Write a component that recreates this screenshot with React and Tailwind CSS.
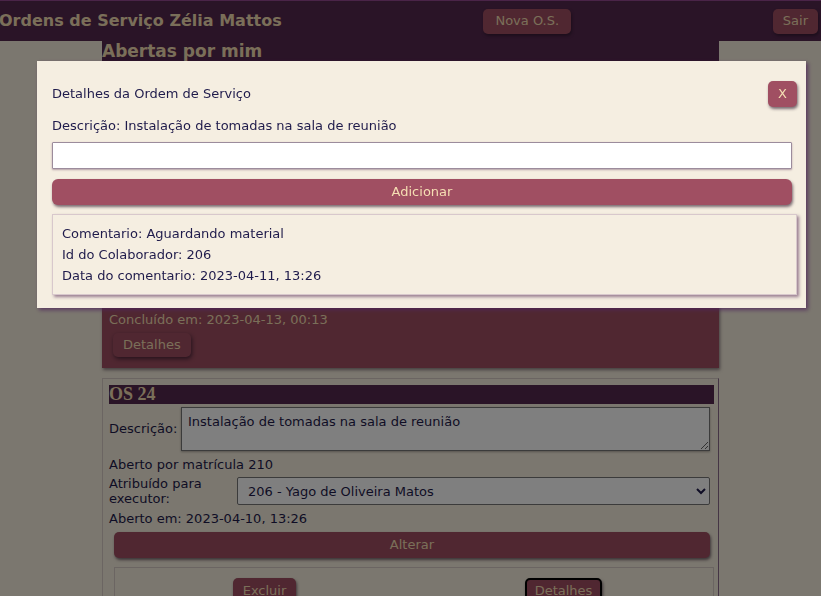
const navy = 'text-[#1f1b4b]'

function Btn({ children, className = '' }) {
  return (
    <button className={`bg-[#a04f62] text-[#f5deb3] rounded-[5px] shadow-[1px_2px_3px_rgba(40,20,40,0.6)] ${className}`}>
      {children}
    </button>
  )
}

export default function App() {
  return (
    <div className="relative min-h-screen bg-[#f6eede] font-['DejaVu_Sans',Verdana,sans-serif] text-[13px] overflow-hidden">
      <header className="h-[41px] bg-[#54284e] border-t border-[#944890] flex items-center justify-between pr-[3px]">
        <h1 className="text-[16px] font-bold text-[#f5deb3] -ml-[1px]">Ordens de Serviço Zélia Mattos</h1>
        <Btn className="h-[25px] px-[12px] text-[13px]">Nova O.S.</Btn>
        <Btn className="h-[25px] px-[10px] text-[13px]">Sair</Btn>
      </header>

      <main className="w-[617px] mx-auto">
        <div className="bg-[#54284e] h-[20px]">
          <h2 className="text-[17px] font-bold text-[#f5deb3] leading-[20px]">Abertas por mim</h2>
        </div>

        <div className="bg-[#a04f62] text-[#f5deb3] px-[7px] pt-[8px] pb-[11px] shadow-[1px_2px_3px_rgba(40,20,40,0.5)]">
          <div className="h-[241px]" />
          <p className="leading-[20px]">Concluído em: 2023-04-13, 00:13</p>
          <button className="ml-[4px] mt-[3px] h-[24px] px-[10px] bg-[#a04f62] rounded-[5px] shadow-[1px_2px_4px_rgba(40,20,40,0.7)]">Detalhes</button>
        </div>

        <div className={`mt-[10px] border border-[#d6cbc4] border-r-[#8a6a8a] p-[6px] pr-[4px] ${navy}`}>
          <div className="bg-[#54284e] h-[19px] font-['Liberation_Serif',serif] font-bold text-[18px] leading-[19px] text-[#f5deb3]">OS 24</div>
          <div className="flex items-center mt-[3px] pr-[4px]">
            <span className="w-[72px]">Descrição:</span>
            <textarea
              readOnly
              value="Instalação de tomadas na sala de reunião"
              className="flex-1 h-[44px] bg-white border border-[#777] shadow-[0_1px_2px_rgba(0,0,0,0.3)] px-[6px] py-[6px] resize-y outline-none font-['DejaVu_Sans',sans-serif] text-[13px] leading-[16px]"
            />
          </div>
          <p className="mt-[5px] leading-[18px]">Aberto por matrícula 210</p>
          <div className="flex items-center mt-[2px] pr-[4px]">
            <span className="w-[128px] leading-[15px]">Atribuído para executor:</span>
            <select className="flex-1 h-[28px] bg-white border border-[#777] rounded-[2px] px-[6px] text-[13px] font-['DejaVu_Sans',sans-serif] text-[#1f1b4b]">
              <option>206 - Yago de Oliveira Matos</option>
            </select>
          </div>
          <p className="leading-[18px] mt-[4px]">Aberto em: 2023-04-10, 13:26</p>
          <Btn className="ml-[5px] mt-[4px] w-[596px] h-[26px] block">Alterar</Btn>
          <div className="ml-[5px] mt-[9px] border border-[#d6cbc4] grid grid-cols-2 justify-items-center pt-[10px] pb-[10px]">
            <Btn className="h-[26px] px-[10px]">Excluir</Btn>
            <Btn className="h-[26px] px-[8px] border-2 border-black">Detalhes</Btn>
          </div>
        </div>
      </main>

      <div className="fixed inset-0 bg-black/50">
        <div className={`absolute left-[37px] top-[61px] w-[769px] h-[247px] bg-[#f5eee1] shadow-[2px_2px_4px_rgba(80,40,90,0.8)] pl-[15px] pr-[9px] pt-[20px] ${navy}`}>
          <div className="flex items-center justify-between h-[26px]">
            <span>Detalhes da Ordem de Serviço</span>
            <Btn className="w-[29px] h-[26px] text-[13px]">X</Btn>
          </div>
          <p className="mt-[10px] leading-[18px]">Descrição: Instalação de tomadas na sala de reunião</p>
          <input className="mt-[7px] block w-[740px] h-[27px] bg-white border border-[#9c8c9c] rounded-[1px] shadow-[0_1px_2px_rgba(80,40,80,0.4)] outline-none" />
          <Btn className="mt-[10px] block w-[740px] h-[26px] rounded-[6px]">Adicionar</Btn>
          <div className="mt-[9px] w-[745px] border border-[#d8c8cc] bg-[#f5eee1] shadow-[2px_2px_3px_rgba(90,50,90,0.6)] px-[9px] py-[8px] leading-[21px]">
            <p>Comentario: Aguardando material</p>
            <p>Id do Colaborador: 206</p>
            <p>Data do comentario: 2023-04-11, 13:26</p>
          </div>
        </div>
      </div>
    </div>
  )
}
